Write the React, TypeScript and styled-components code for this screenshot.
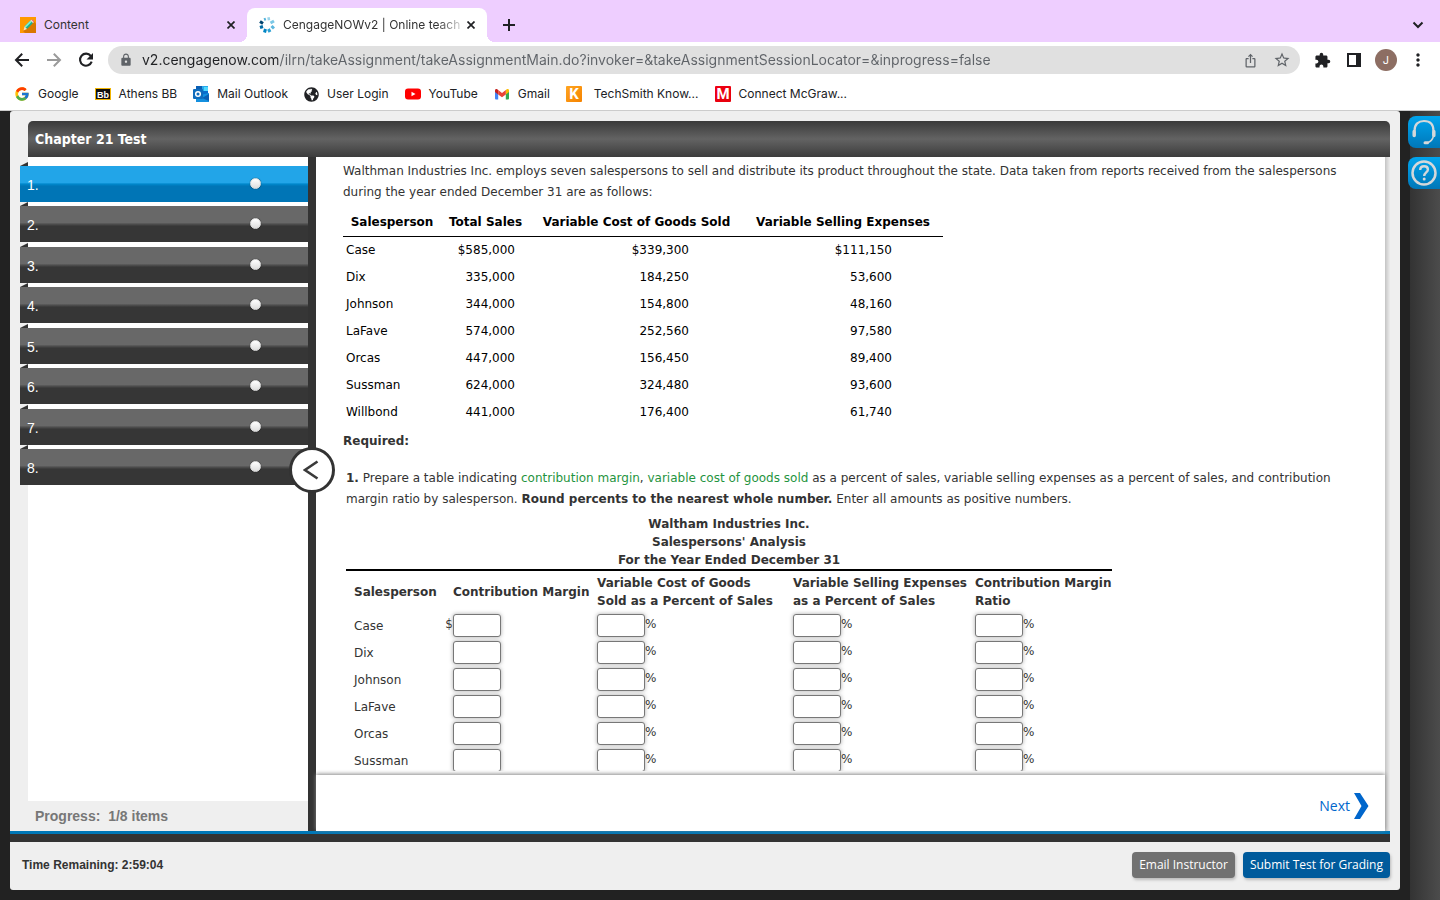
import React from 'react';
import styled, { createGlobalStyle, css } from 'styled-components';
import { FcGoogle } from 'react-icons/fc';
import { FaGlobeAmericas } from 'react-icons/fa';
import {
  MdLock,
  MdIosShare,
  MdStarBorder,
  MdExtension,
  MdMoreVert,
} from 'react-icons/md';

const fonts = {
  chrome: 'Inter, "Liberation Sans", sans-serif',
  verdana: 'Verdana, "DejaVu Sans", sans-serif',
  tahoma: 'Tahoma, "DejaVu Sans Condensed", "DejaVu Sans", sans-serif',
  arial: '"Liberation Sans", Arial, sans-serif',
  open: '"Open Sans", sans-serif',
};

const GlobalStyle = createGlobalStyle`
  * { box-sizing: border-box; }
  body { margin: 0; background: #222; }
  button, input { font: inherit; color: inherit; }
  button { border: 0; padding: 0; background: none; cursor: pointer; }
  table { border-collapse: collapse; border-spacing: 0; }
  p { margin: 0; }
`;

const Page = styled.div`
  display: flex;
  flex-direction: column;
  height: 100vh;
  min-height: 640px;
`;

/* ---------- browser window ---------- */

const TabStrip = styled.div`
  display: flex;
  align-items: flex-end;
  height: 42px;
  background: #eeceff;
  font: 12px/16px ${fonts.chrome};
  color: #333;
`;

const Tab = styled.div<{ $active?: boolean }>`
  position: relative;
  display: flex;
  align-items: center;
  height: 34px;
  width: ${(p) => (p.$active ? '240px' : '247px')};
  padding: 0 8px 0 ${(p) => (p.$active ? '12px' : '20px')};
  gap: 8px;
  ${(p) =>
    p.$active &&
    css`
      background: #fff;
      border-radius: 8px 8px 0 0;
      &::before,
      &::after {
        content: '';
        position: absolute;
        bottom: 0;
        width: 8px;
        height: 8px;
      }
      &::before {
        left: -8px;
        background: radial-gradient(circle at 0 0, transparent 8px, #fff 8px);
      }
      &::after {
        right: -8px;
        background: radial-gradient(circle at 100% 0, transparent 8px, #fff 8px);
      }
    `}
`;

const TabTitle = styled.span<{ $fade?: boolean }>`
  flex: 1;
  min-width: 0;
  overflow: hidden;
  white-space: nowrap;
  ${(p) => p.$fade && css`
    margin-right: -7px;
    mask-image: linear-gradient(to right, #000 154px, transparent 184px);
  `}
`;

const TabButton = styled.button`
  display: grid;
  place-items: center;
  width: 16px;
  height: 16px;
`;

const NewTab = styled(TabButton)`
  width: 28px;
  height: 34px;
  margin-left: 8px;
`;

const TabSearch = styled(NewTab)`
  margin-left: auto;
  margin-right: 8px;
`;

const Toolbar = styled.div`
  display: flex;
  align-items: center;
  height: 36px;
  padding-left: 12px;
  padding-right: 12px;
  background: #fff;
`;

const ToolButton = styled.button<{ $muted?: boolean }>`
  display: grid;
  place-items: center;
  width: 32px;
  height: 32px;
  color: ${(p) => (p.$muted ? '#9a9a9a' : '#202124')};
`;

const NavButtons = styled.div`
  display: flex;
  width: 96px;
  margin-left: -6px;
  margin-right: 6px;
`;

const AddressBar = styled.label`
  display: flex;
  align-items: center;
  flex: 1;
  height: 28px;
  padding: 0 2px 0 11px;
  border-radius: 14px;
  background: #e0e0e0;
  color: #5f6368;
`;

const Address = styled.input`
  flex: 1;
  min-width: 0;
  margin-left: 9px;
  padding: 0;
  border: 0;
  outline: 0;
  font: 14px/20px ${fonts.chrome};
  color: transparent;
  background: linear-gradient(to right, #202124 136px, #5f6368 136px);
  background-clip: text;
  -webkit-background-clip: text;
`;

const Actions = styled.div`
  display: flex;
  margin-left: 6px;
  margin-right: -6px;
`;

const Avatar = styled.span`
  display: grid;
  place-items: center;
  width: 22px;
  height: 22px;
  border-radius: 50%;
  background: #8d6e63;
  color: #fff;
  font: 11px/22px ${fonts.chrome};
`;

const Bookmarks = styled.nav`
  display: flex;
  align-items: center;
  gap: 16px;
  height: 33px;
  padding: 0 14px;
  border-bottom: 1px solid #ccc;
  background: #fff;
  font: 12px/16px ${fonts.chrome};
`;

const Bookmark = styled.a<{ $wide?: boolean }>`
  display: flex;
  align-items: center;
  gap: ${(p) => (p.$wide ? 12 : 8)}px;
  color: #202124;
  text-decoration: none;
  white-space: nowrap;
`;

/* ---------- test player ---------- */

const Stage = styled.div`
  display: flex;
  flex: 1;
  min-height: 0;
  padding-left: 10px;
  background: #222;
`;

const Panel = styled.main`
  display: flex;
  flex-direction: column;
  flex: 1;
  min-width: 0;
  margin-bottom: 10px;
  padding-top: 10px;
  border-radius: 3px;
  background: #efefef;
`;

const Rail = styled.aside`
  display: flex;
  flex-direction: column;
  gap: 9px;
  width: 30px;
  margin-left: 10px;
  padding-top: 5px;
  background: linear-gradient(to right, #333, #4c4c4c);
`;

const RailButton = styled.button`
  display: flex;
  align-items: center;
  width: 32px;
  height: 32px;
  margin-left: -2px;
  padding-left: 3px;
  border-radius: 8px 0 0 8px;
  background: linear-gradient(#00a5ee, #0077b8);
`;

const TitleBar = styled.h1`
  margin: 0 10px 0 18px;
  padding: 0 7px;
  border-radius: 5px 5px 0 0;
  background: linear-gradient(#3a3a3a, #636363 50%, #4a4a4a 82%, #3c3c3c);
  color: #fff;
  font: bold 14px/36px ${fonts.tahoma};
`;

const Body = styled.div`
  display: flex;
  flex: 1;
  min-height: 0;
  margin: 0 10px 0 18px;
`;

const Sidebar = styled.div`
  display: flex;
  flex-direction: column;
  width: 280px;
  background: #fff;
`;

const QuestionList = styled.nav`
  display: flex;
  flex-direction: column;
  justify-content: space-between;
  height: 319px;
  margin: 9px 0 0 -8px;
`;

const Question = styled.button<{ $current?: boolean }>`
  position: relative;
  display: flex;
  align-items: center;
  justify-content: space-between;
  height: 36px;
  padding: 2px 47px 0 7px;
  color: #fff;
  font: 14px/20px ${fonts.arial};
  background: ${(p) =>
    p.$current
      ? 'linear-gradient(#22a5e8 46%, #0088cc 50%, #0075b6 56%)'
      : 'linear-gradient(#686868 46%, #505050 50%, #363636 56%)'};
  &::before {
    content: '';
    position: absolute;
    left: 0;
    top: -4px;
    border-left: 8px solid transparent;
    border-bottom: 4px solid #333;
  }
`;

const Dot = styled.span`
  width: 11px;
  height: 11px;
  margin-bottom: 3px;
  border: 1px solid #ddd;
  border-radius: 50%;
  background: linear-gradient(#fff, #ddd);
  box-shadow: 0 0 1px #222;
`;

const Progress = styled.div`
  margin-top: auto;
  padding: 0 7px;
  background: #efefef;
  color: #777;
  font: bold 14px/30px ${fonts.arial};
  white-space: pre;
`;

const Divider = styled.div`
  position: relative;
  width: 8px;
  background: #333;
`;

const Collapse = styled.button`
  position: absolute;
  top: 290px;
  left: -19px;
  display: grid;
  place-items: center;
  width: 46px;
  height: 46px;
  padding-right: 3px;
  border: 3px solid #333;
  border-radius: 50%;
  background: #fff;
`;

const Content = styled.section`
  display: flex;
  flex-direction: column;
  flex: 1;
  min-width: 0;
  background: #fff;
`;

const EdgeShade = styled.div`
  width: 5px;
  background: linear-gradient(to right, #c4c4c4, #ececec);
`;

const Scroller = styled.div`
  flex: 1;
  min-height: 0;
  overflow-y: auto;
  scrollbar-width: none;
  padding: 4px 27px 0;
  color: #333;
  font: 12px/21px ${fonts.verdana};
`;

const SalesTable = styled.table`
  table-layout: fixed;
  width: 600px;
  margin-top: 7px;
  color: #000;
  th {
    height: 26px;
    padding: 0;
    border-bottom: 1px solid #000;
    white-space: nowrap;
  }
  td {
    height: 27px;
    padding: 2px 0 0 3px;
    text-align: right;
  }
  td:first-child { text-align: left; }
  td:nth-child(2) { padding-right: 15px; }
  td:nth-child(3) { padding-right: 54px; }
  td:nth-child(4) { padding-right: 51px; }
`;

const Required = styled.p`
  margin-top: 6px;
  font-weight: bold;
`;

const Instruction = styled.p`
  margin: 16px 0 0 3px;
`;

const Term = styled.a`
  color: #1f9440;
  text-decoration: none;
`;

const AnalysisTable = styled.table`
  table-layout: fixed;
  width: 766px;
  margin: 5px 0 0 3px;
  line-height: 18px;
  caption {
    font-weight: bold;
    border-bottom: 2px solid #000;
  }
  thead th {
    height: 41px;
    padding: 0 0 0 2px;
    text-align: left;
    white-space: nowrap;
  }
  thead th:nth-child(1) { padding-left: 8px; }
  thead th:nth-child(2) { padding-left: 10px; }
  tbody th {
    padding: 0 0 0 8px;
    font-weight: normal;
    text-align: left;
  }
  td {
    height: 27px;
    padding: 0 0 0 2px;
  }
  td:nth-child(2) { padding-left: 0; }
`;

const Entry = styled.label`
  display: flex;
  align-items: flex-start;
  line-height: 20px;
`;

const Currency = styled.span`
  width: 10px;
  text-align: right;
`;

const AnswerInput = styled.input`
  width: 48px;
  height: 23px;
  padding: 0 4px;
  border: 1px solid #777;
  border-radius: 3px;
  background: #fff;
  box-shadow: 0 0 4px #aaa;
`;

const NextBar = styled.div`
  position: relative;
  display: flex;
  align-items: center;
  justify-content: flex-end;
  height: 56px;
  margin-top: 4px;
  padding: 6px 16px 0 0;
  background: #fff;
  box-shadow: 0 -1px 4px #888;
`;

const NextButton = styled.button`
  display: flex;
  align-items: center;
  gap: 4px;
  color: #0066cc;
  font: 14px/26px ${fonts.open};
`;

const Rule = styled.div`
  height: 11px;
  margin-right: 10px;
  border-top: 3px solid #0077b6;
  background: #333;
`;

const Footer = styled.footer`
  display: flex;
  align-items: center;
  gap: 8px;
  height: 48px;
  padding: 0 10px 2px 12px;
  color: #333;
`;

const Timer = styled.span`
  margin-right: auto;
  font: bold 12px/16px ${fonts.arial};
`;

const ActionButton = styled.button<{ $primary?: boolean }>`
  padding: 0 7px;
  border-radius: 4px;
  background: ${(p) => (p.$primary ? '#005b9c' : '#717171')};
  box-shadow: 1px 2px 3px #bbb;
  color: #fff;
  font: 12px/26px ${fonts.open};
`;

/* ---------- icons ---------- */

const PencilIcon = () => (
  <svg width="16" height="16" viewBox="0 0 16 16" aria-hidden="true">
    <path fill="#f90" d="M0 0h16v16H0z" />
    <path fill="#d97800" d="M13.500 4L16 6.500V16H5l-2-2z" />
    <path fill="#1fae90" d="M4.500 9.500l6-6 2.500 2.500-6 6z" />
    <path fill="#7ff0d2" d="M4.500 9.500l6-6 1.200 1.200-6 6z" />
    <path fill="#f7dfc0" d="M4.500 9.500L7 12l-3.500 1.500z" />
    <path fill="#e8e8f0" d="M10.500 3.500l.8-.8 2.500 2.500-.8.8z" />
    <path fill="#e86a8a" d="M11.300 2.700c1-1 3.500 1.500 2.500 2.500z" />
  </svg>
);

const SwirlIcon = () => (
  <svg width="16" height="16" viewBox="0 0 16 16" fill="none" strokeWidth="3" aria-hidden="true">
    <path stroke="#9ad4ea" d="M8.500 2L11 1.500" />
    <path stroke="#7cc8e6" d="M11.500 6l3.500-2" />
    <path stroke="#5bb6de" d="M12.500 9l2.500 2.500" />
    <path stroke="#2aa0d4" d="M9.500 12l1.500 3" />
    <path stroke="#0085c4" d="M6.500 12L5.500 15.500" />
    <path stroke="#006ba6" d="M4 9.500L1 10.500" />
    <path stroke="#00446f" d="M4 6.500L1 4.500" />
    <path stroke="#56b4dc" d="M5.500 1l.8 2.500" strokeWidth="2" />
  </svg>
);

const CloseIcon = () => (
  <svg width="8" height="8" viewBox="0 0 8 8" stroke="#202124" strokeWidth="1.700" aria-hidden="true">
    <path d="M.5.5l7 7M7.500.5l-7 7" />
  </svg>
);

const PlusIcon = () => (
  <svg width="12" height="12" viewBox="0 0 12 12" stroke="#202124" strokeWidth="2" aria-hidden="true">
    <path d="M6 0v12M0 6h12" />
  </svg>
);

const CaretIcon = () => (
  <svg width="12" height="8" viewBox="0 0 12 8" fill="none" stroke="#202124" strokeWidth="2" aria-hidden="true">
    <path d="M1.500 1.500L6 6l4.500-4.500" />
  </svg>
);

const BackIcon = () => (
  <svg width="16" height="16" viewBox="0 0 16 16" fill="none" stroke="currentColor" strokeWidth="2" aria-hidden="true">
    <path d="M15 8H2.500M8.200 1.700L2 8l6.200 6.300" />
  </svg>
);

const ForwardIcon = () => (
  <svg width="16" height="16" viewBox="0 0 16 16" fill="none" stroke="currentColor" strokeWidth="2" aria-hidden="true">
    <path d="M1 8h12.500M7.800 1.700L14 8l-6.200 6.300" />
  </svg>
);

const ReloadIcon = () => (
  <svg width="16" height="16" viewBox="0 0 16 16" fill="none" stroke="currentColor" strokeWidth="2.100" aria-hidden="true">
    <path d="M12.800 4A6 6 0 1 0 13.700 9.700" />
    <path fill="currentColor" stroke="none" d="M15 1v6.500H8.500z" />
  </svg>
);

const SidePanelIcon = () => (
  <svg width="14" height="14" viewBox="0 0 14 14" aria-hidden="true">
    <path fill="#202124" fillRule="evenodd" d="M0 0h14v14H0zM2 2v10h7V2z" />
  </svg>
);

const BlackboardIcon = () => (
  <svg width="16" height="16" viewBox="0 0 16 16" aria-hidden="true">
    <rect x=".5" y="2.500" width="15" height="11" fill="#111" stroke="#f0b400" />
    <text x="8" y="11.500" textAnchor="middle" fontFamily="Liberation Sans" fontWeight="bold" fontSize="9" fill="#fff">Bb</text>
  </svg>
);

const OutlookIcon = () => (
  <svg width="16" height="16" viewBox="0 0 16 16" aria-hidden="true">
    <path fill="#0a5fb4" d="M3 0h6v6H3z" />
    <path fill="#28a8ea" d="M9 0h6v5H9z" />
    <path fill="#50d9ff" d="M11 1h4v4h-4z" />
    <path fill="#0a6ccb" d="M4 5h11v4H4z" />
    <path fill="#1490df" d="M3 10l13-3v9H3z" />
    <path fill="#0a5fb4" d="M9 12l7-4v7z" />
    <rect y="3" width="10" height="10" rx="1" fill="#0f6cbd" />
    <circle cx="5" cy="8" r="2.300" fill="none" stroke="#fff" strokeWidth="1.500" />
  </svg>
);

const YouTubeIcon = () => (
  <svg width="16" height="16" viewBox="0 0 16 16" aria-hidden="true">
    <rect y="2.500" width="16" height="11" rx="3" fill="#f00" />
    <path fill="#fff" d="M6.500 5.700l4 2.300-4 2.300z" />
  </svg>
);

const GmailIcon = () => (
  <svg width="16" height="16" viewBox="0 0 16 16" aria-hidden="true">
    <path fill="#4285f4" d="M1 5l3.200 2v6.500H2a1 1 0 0 1-1-1z" />
    <path fill="#34a853" d="M15 5l-3.200 2v6.500H14a1 1 0 0 0 1-1z" />
    <path fill="#fbbc04" d="M11.800 4l1-.8C13.800 2.500 15 3 15 4.400V6l-3.200 2.500z" />
    <path fill="#c5221f" d="M4.200 4l-1-.8C2.200 2.500 1 3 1 4.400V6l3.200 2.500z" />
    <path fill="#ea4335" d="M4.200 4L8 6.900 11.800 4v4.500L8 11.300 4.200 8.500z" />
  </svg>
);

const LetterIcon = ({ letter, from, to }: { letter: string; from: string; to: string }) => (
  <svg width="16" height="16" viewBox="0 0 16 16" aria-hidden="true">
    <defs>
      <linearGradient id={`tile-${letter}`} x1="0" y1="0" x2="1" y2="1">
        <stop offset="0" stopColor={from} />
        <stop offset="1" stopColor={to} />
      </linearGradient>
    </defs>
    <rect width="16" height="16" rx="1" fill={`url(#tile-${letter})`} />
    <text x="8" y="13" textAnchor="middle" fontFamily="Roboto" fontWeight="bold" fontSize="15" fill="#fff">{letter}</text>
  </svg>
);

const HeadsetIcon = () => (
  <svg width="26" height="26" viewBox="0 0 26 26" fill="none" stroke="#d4d8da" aria-hidden="true">
    <path strokeWidth="2.200" d="M3.500 12C3.500 5 7.500 2 13 2s9.500 3 9.500 10" />
    <path strokeWidth="3.500" strokeLinecap="round" d="M3.200 12.500v4M22.800 12.500v4" />
    <path strokeWidth="1.500" d="M22.500 17c-1 4-3.500 6-6 6.500" />
    <path strokeWidth="3" strokeLinecap="round" d="M14 23.800h2.500" />
  </svg>
);

const HelpIcon = () => (
  <svg width="26" height="26" viewBox="0 0 26 26" fill="none" stroke="#d4d8da" aria-hidden="true">
    <circle cx="13" cy="13" r="11.500" strokeWidth="2.500" />
    <path strokeWidth="2.400" d="M9.200 10c0-2.500 1.600-3.800 3.900-3.800 2.200 0 3.800 1.200 3.800 3.200 0 3-3.700 2.900-3.700 6.600" />
    <circle cx="13.200" cy="19" r="1.500" fill="#d4d8da" stroke="none" />
  </svg>
);

const ChevronLeft = () => (
  <svg width="16" height="20" viewBox="0 0 16 20" fill="none" stroke="#3a3a3a" strokeWidth="2.600" aria-hidden="true">
    <path d="M14.500 1.500L2 10l12.500 8.500" />
  </svg>
);

const NextArrow = () => (
  <svg width="15" height="26" viewBox="0 0 15 26" aria-hidden="true">
    <path fill="#0066cc" d="M0 0h6l8.500 13L6 26H0l7.500-13z" />
  </svg>
);

/* ---------- data ---------- */

const bookmarks = [
  { label: 'Google', icon: <FcGoogle size={16} /> },
  { label: 'Athens BB', icon: <BlackboardIcon /> },
  { label: 'Mail Outlook', icon: <OutlookIcon /> },
  { label: 'User Login', icon: <FaGlobeAmericas size={15} /> },
  { label: 'YouTube', icon: <YouTubeIcon /> },
  { label: 'Gmail', icon: <GmailIcon /> },
  { label: 'TechSmith Know...', icon: <LetterIcon letter="K" from="#ffa51f" to="#f58200" />, wide: true },
  { label: 'Connect McGraw...', icon: <LetterIcon letter="M" from="#f00012" to="#e6000c" /> },
];

const sales = [
  ['Case', '$585,000', '$339,300', '$111,150'],
  ['Dix', '335,000', '184,250', '53,600'],
  ['Johnson', '344,000', '154,800', '48,160'],
  ['LaFave', '574,000', '252,560', '97,580'],
  ['Orcas', '447,000', '156,450', '89,400'],
  ['Sussman', '624,000', '324,480', '93,600'],
  ['Willbond', '441,000', '176,400', '61,740'],
];

const percentColumns = ['variable cost percent', 'variable selling percent', 'contribution margin ratio'];

export default function App() {
  return (
    <Page>
      <GlobalStyle />
      <header>
        <TabStrip>
          <Tab>
            <PencilIcon />
            <TabTitle>Content</TabTitle>
            <TabButton aria-label="Close tab"><CloseIcon /></TabButton>
          </Tab>
          <Tab $active>
            <SwirlIcon />
            <TabTitle $fade>CengageNOWv2 | Online teach</TabTitle>
            <TabButton aria-label="Close tab"><CloseIcon /></TabButton>
          </Tab>
          <NewTab aria-label="New tab"><PlusIcon /></NewTab>
          <TabSearch aria-label="Search tabs"><CaretIcon /></TabSearch>
        </TabStrip>
        <Toolbar>
          <NavButtons>
            <ToolButton aria-label="Back"><BackIcon /></ToolButton>
            <ToolButton aria-label="Forward" $muted><ForwardIcon /></ToolButton>
            <ToolButton aria-label="Reload"><ReloadIcon /></ToolButton>
          </NavButtons>
          <AddressBar>
            <MdLock size={14} />
            <Address
              aria-label="Address"
              defaultValue="v2.cengagenow.com/ilrn/takeAssignment/takeAssignmentMain.do?invoker=&takeAssignmentSessionLocator=&inprogress=false"
            />
            <ToolButton aria-label="Share"><MdIosShare size={15} color="#5f6368" /></ToolButton>
            <ToolButton aria-label="Bookmark this page"><MdStarBorder size={18} color="#5f6368" /></ToolButton>
          </AddressBar>
          <Actions>
            <ToolButton aria-label="Extensions"><MdExtension size={17} /></ToolButton>
            <ToolButton aria-label="Side panel"><SidePanelIcon /></ToolButton>
            <ToolButton aria-label="Profile"><Avatar>J</Avatar></ToolButton>
            <ToolButton aria-label="Menu"><MdMoreVert size={20} /></ToolButton>
          </Actions>
        </Toolbar>
        <Bookmarks>
          {bookmarks.map((b) => (
            <Bookmark key={b.label} href="#" $wide={b.wide}>{b.icon}{b.label}</Bookmark>
          ))}
        </Bookmarks>
      </header>

      <Stage>
        <Panel>
          <TitleBar>Chapter 21 Test</TitleBar>
          <Body>
            <Sidebar>
              <QuestionList>
                {[1, 2, 3, 4, 5, 6, 7, 8].map((n) => (
                  <Question key={n} $current={n === 1}>{n}.<Dot /></Question>
                ))}
              </QuestionList>
              <Progress>Progress:  1/8 items</Progress>
            </Sidebar>
            <Divider>
              <Collapse aria-label="Collapse question list"><ChevronLeft /></Collapse>
            </Divider>
            <Content>
              <Scroller>
                <p>
                  Walthman Industries Inc. employs seven salespersons to sell and distribute its product throughout the
                  state. Data taken from reports received from the salespersons during the year ended December 31 are as
                  follows:
                </p>
                <SalesTable>
                  <colgroup>
                    <col width="98" /><col width="89" /><col width="213" /><col width="200" />
                  </colgroup>
                  <thead>
                    <tr>
                      <th>Salesperson</th>
                      <th>Total Sales</th>
                      <th>Variable Cost of Goods Sold</th>
                      <th>Variable Selling Expenses</th>
                    </tr>
                  </thead>
                  <tbody>
                    {sales.map((row) => (
                      <tr key={row[0]}>{row.map((cell) => <td key={cell}>{cell}</td>)}</tr>
                    ))}
                  </tbody>
                </SalesTable>
                <Required>Required:</Required>
                <Instruction>
                  <b>1.</b> Prepare a table indicating <Term href="#">contribution margin</Term>,{' '}
                  <Term href="#">variable cost of goods sold</Term> as a percent of sales, variable selling expenses as a
                  percent of sales, and contribution margin ratio by salesperson.{' '}
                  <b>Round percents to the nearest whole number.</b> Enter all amounts as positive numbers.
                </Instruction>
                <AnalysisTable>
                  <caption>
                    Waltham Industries Inc.<br />Salespersons' Analysis<br />For the Year Ended December 31
                  </caption>
                  <colgroup>
                    <col width="97" /><col width="152" /><col width="196" /><col width="182" /><col width="139" />
                  </colgroup>
                  <thead>
                    <tr>
                      <th>Salesperson</th>
                      <th>Contribution Margin</th>
                      <th>Variable Cost of Goods<br />Sold as a Percent of Sales</th>
                      <th>Variable Selling Expenses<br />as a Percent of Sales</th>
                      <th>Contribution Margin<br />Ratio</th>
                    </tr>
                  </thead>
                  <tbody>
                    {sales.map(([name], i) => (
                      <tr key={name}>
                        <th scope="row">{name}</th>
                        <td>
                          <Entry>
                            <Currency>{i === 0 ? '$' : ''}</Currency>
                            <AnswerInput aria-label={`${name} contribution margin`} />
                          </Entry>
                        </td>
                        {percentColumns.map((column) => (
                          <td key={column}>
                            <Entry><AnswerInput aria-label={`${name} ${column}`} />%</Entry>
                          </td>
                        ))}
                      </tr>
                    ))}
                  </tbody>
                </AnalysisTable>
              </Scroller>
              <NextBar>
                <NextButton>Next<NextArrow /></NextButton>
              </NextBar>
            </Content>
            <EdgeShade />
          </Body>
          <Rule />
          <Footer>
            <Timer>Time Remaining: 2:59:04</Timer>
            <ActionButton>Email Instructor</ActionButton>
            <ActionButton $primary>Submit Test for Grading</ActionButton>
          </Footer>
        </Panel>
        <Rail>
          <RailButton aria-label="Support"><HeadsetIcon /></RailButton>
          <RailButton aria-label="Help"><HelpIcon /></RailButton>
        </Rail>
      </Stage>
    </Page>
  );
}
